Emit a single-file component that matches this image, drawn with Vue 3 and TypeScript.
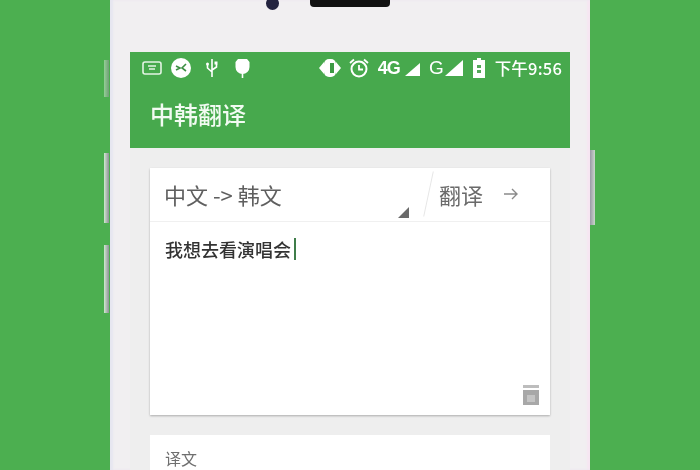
<script setup lang="ts">
const sourceText = '我想去看演唱会';
</script>

<template>
  <div class="page">
    <div class="phone">
      <span class="side-btn left b1" />
      <span class="side-btn left b2" />
      <span class="side-btn left b3" />
      <span class="side-btn right b4" />

      <div class="phone-top">
        <span class="camera" />
        <span class="speaker" />
      </div>

      <div class="screen">
        <!-- Status bar -->
        <div class="status-bar">
          <div class="status-left">
            <svg width="20" height="16" viewBox="0 0 20 16">
              <rect x="1" y="2" width="18" height="12" rx="2" fill="none" stroke="#e4f4e4" stroke-width="1.6" />
              <path d="M6 6h8M7 9h6" stroke="#e4f4e4" stroke-width="1.4" />
            </svg>
            <svg width="20" height="20" viewBox="0 0 20 20">
              <circle cx="10" cy="10" r="10" fill="#fff" />
              <path d="M5 8l4 2-4 2M15 6l-4 4 4 3" fill="none" stroke="#3d8f43" stroke-width="1.6" />
            </svg>
            <svg width="12" height="20" viewBox="0 0 12 20">
              <path d="M6 1v18M6 14L1.5 10V7M6 12l4.500-3V6" fill="none" stroke="#fff" stroke-width="1.6" />
              <rect x="8.500" y="3.500" width="3" height="3" fill="#fff" />
              <circle cx="1.500" cy="6" r="1.500" fill="#fff" />
            </svg>
            <svg width="15" height="20" viewBox="0 0 15 20">
              <path d="M3 1h9l2.500 3v5a7 7 0 0 1-14 0V4z" fill="#fff" />
              <path d="M7.500 14v6" stroke="#fff" stroke-width="1.600" />
            </svg>
          </div>
          <div class="status-right">
            <svg width="24" height="20" viewBox="0 0 24 20">
              <path d="M1 10l5-6v12zM23 10l-5-6v12z" fill="#fff" />
              <rect x="6" y="1" width="12" height="18" rx="5" fill="#fff" />
              <rect x="12" y="5" width="4" height="10" fill="#3d9a44" />
            </svg>
            <svg width="20" height="20" viewBox="0 0 20 20">
              <circle cx="10" cy="11" r="7.500" fill="none" stroke="#fff" stroke-width="2" />
              <path d="M10 7v4.500h4M1 5l4-3.500M19 5l-4-3.500" fill="none" stroke="#fff" stroke-width="1.800" />
            </svg>
            <span class="net">
              <b class="net-label">4G</b>
              <svg class="signal-small" width="15" height="13" viewBox="0 0 15 13"><path d="M15 0v13H0z" fill="#fff" /></svg>
            </span>
            <span class="net wide">
              <b class="net-label big">G</b>
              <svg width="18" height="16" viewBox="0 0 18 16"><path d="M18 0v16H0z" fill="#fff" /></svg>
            </span>
            <svg class="battery" width="12" height="20" viewBox="0 0 12 20">
              <path d="M4 0h4v2h4v18H0V2h4z" fill="#fff" />
              <path d="M4 7h4v3H4zM4 12h4v3H4z" fill="#55a85a" />
            </svg>
            <span class="clock">下午9:56</span>
          </div>
        </div>

        <!-- App bar -->
        <div class="app-bar">中韩翻译</div>

        <div class="content">
          <div class="card input-card">
            <div class="card-head">
              <div class="lang">
                <span>中文 -&gt; 韩文</span>
                <span class="caret" />
              </div>
              <span class="slash" />
              <div class="translate">
                <span>翻译</span>
                <svg width="16" height="14" viewBox="0 0 16 14">
                  <path d="M1 7h13M9 2l5 5-5 5" fill="none" stroke="#8a8a8a" stroke-width="1.400" />
                </svg>
              </div>
            </div>
            <div class="card-body">
              <div class="source">{{ sourceText }}<span class="cursor" /></div>
              <div class="card-foot">
                <svg width="18" height="20" viewBox="0 0 18 20">
                  <path d="M1 0h16v3H1z" fill="#bdbdbd" />
                  <path d="M1 5h16v15H1z" fill="#a8a8a8" />
                  <path d="M5 10h8v7H5z" fill="#c4c4c4" />
                </svg>
              </div>
            </div>
          </div>

          <div class="card result-card">
            <div class="result-label">译文</div>
          </div>
        </div>
      </div>
    </div>
  </div>
</template>

<style>
html,
body {
  margin: 0;
  overflow: hidden;
}
</style>

<style scoped>
.page {
  width: 700px;
  height: 470px;
  overflow: hidden;
  display: flex;
  justify-content: center;
  background: #4caf50;
  font-family: "Noto Sans CJK SC", "Liberation Sans", sans-serif;
  filter: blur(0.6px);
}

.phone {
  position: relative;
  box-sizing: border-box;
  width: 480px;
  height: 470px;
  padding: 0 20px;
  background: #f1eff1;
  box-shadow: inset 3px 0 2px #e6e6f0, inset -3px 0 2px #f6e6f2;
}

.side-btn {
  position: absolute;
  width: 5px;
  background: linear-gradient(90deg, #cfe9cf, #8f9096);
}

.side-btn.left {
  left: -6px;
}

.side-btn.right {
  right: -5px;
  background: linear-gradient(90deg, #9a9aa6, #c9d6cb);
}

.b1 {
  top: 60px;
  height: 37px;
  opacity: 0.55;
}

.b2 {
  top: 153px;
  height: 70px;
}

.b3 {
  top: 245px;
  height: 68px;
}

.b4 {
  top: 150px;
  height: 75px;
}

.phone-top {
  height: 52px;
  display: flex;
  align-items: flex-start;
  padding-left: 136px;
  gap: 31px;
}

.camera {
  width: 13px;
  height: 13px;
  margin-top: -3px;
  border-radius: 50%;
  background: #23233f;
}

.speaker {
  width: 80px;
  height: 7px;
  border-radius: 0 0 4px 4px;
  background: #111;
}

.screen {
  height: 418px;
  background: #eeeeee;
}

.status-bar {
  height: 32px;
  box-sizing: border-box;
  padding: 0 8px 0 12px;
  display: flex;
  align-items: center;
  justify-content: space-between;
  background: #47a94d;
  color: #fff;
}

.status-left,
.status-right {
  display: flex;
  align-items: center;
}

.status-left {
  gap: 9px;
}

.status-left svg:nth-child(3) {
  margin: 0 8px 0 6px;
}

.status-right {
  gap: 7px;
}

.net {
  display: flex;
  align-items: center;
  gap: 2px;
  margin-left: 2px;
}

.net.wide {
  margin-left: 2px;
}

.signal-small {
  margin: 2px 0 0 3px;
}

.net-label {
  font-family: "Liberation Sans", sans-serif;
  font-size: 18px;
  line-height: 20px;
  letter-spacing: -1px;
}

.net-label.big {
  font-size: 19px;
  font-weight: 400;
}

.battery {
  margin-left: 3px;
}

.clock {
  margin-left: 3px;
  font-size: 16.5px;
  line-height: 20px;
  font-weight: 500;
  letter-spacing: 0.2px;
  white-space: nowrap;
}

.app-bar {
  height: 64px;
  box-sizing: border-box;
  padding: 0 0 6px 20px;
  display: flex;
  align-items: center;
  background: #47a94d;
  color: #f2fbf2;
  font-size: 24px;
  font-weight: 500;
}

.content {
  padding: 20px;
  display: flex;
  flex-direction: column;
  gap: 20px;
}

.card {
  background: #fff;
  box-shadow: 0 1px 2px rgba(0, 0, 0, 0.28);
}

.input-card {
  height: 247px;
  display: flex;
  flex-direction: column;
}

.card-head {
  height: 54px;
  flex: none;
  display: flex;
  border-bottom: 1px solid #f0f0f0;
  box-sizing: border-box;
}

.lang {
  position: relative;
  width: 272px;
  padding-left: 14px;
  box-sizing: border-box;
  font-size: 22px;
  line-height: 52px;
  color: #5f5f5f;
}

.caret {
  position: absolute;
  right: 13px;
  bottom: 3px;
  width: 0;
  height: 0;
  border-left: 11px solid transparent;
  border-bottom: 11px solid #6a6a6a;
}

.slash {
  width: 1px;
  height: 46px;
  margin: 3px 0 0 6px;
  background: #e6e6e6;
  transform: rotate(12deg);
}

.translate {
  display: flex;
  align-items: center;
  gap: 20px;
  margin: 0 0 2px 10px;
  font-size: 22px;
  color: #6a6a6a;
}

.card-body {
  flex: 1;
  display: flex;
  flex-direction: column;
  justify-content: space-between;
  padding: 14px 10px 10px 15px;
}

.source {
  display: flex;
  align-items: center;
  font-size: 18px;
  line-height: 26px;
  font-weight: 500;
  color: #333;
}

.cursor {
  width: 2px;
  height: 22px;
  margin-left: 3px;
  background: #3f7d4a;
}

.card-foot {
  display: flex;
  justify-content: flex-end;
}

.result-card {
  height: 100px;
  flex: none;
  padding: 13px 15px;
  box-shadow: none;
}

.result-label {
  font-size: 16px;
  line-height: 20px;
  color: #6f6f6f;
}
</style>
